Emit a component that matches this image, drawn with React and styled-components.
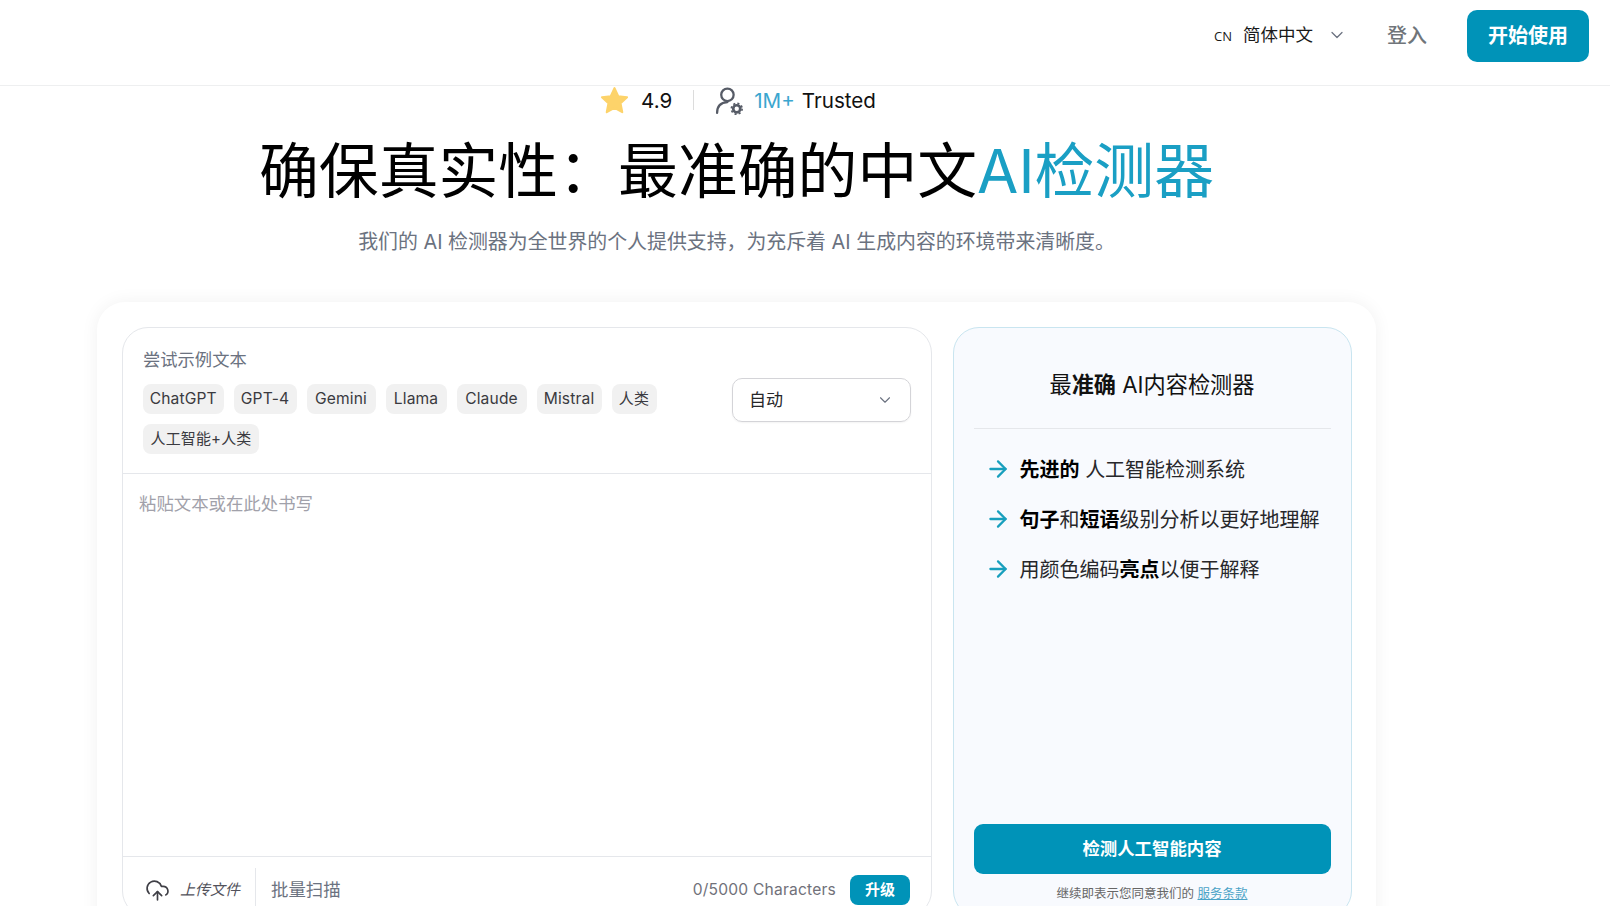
import React from "react";
import styled, { createGlobalStyle } from "styled-components";
import { ChevronDown, ArrowRight, CloudUpload } from "lucide-react";

const Global = createGlobalStyle`
  html, body { margin: 0; height: 100%; overflow: hidden; background: #fff; }
  body { font-family: Inter, "Noto Sans CJK SC", sans-serif; color: #0a0a0a; }
  * { box-sizing: border-box; }
`;
const Header = styled.header`
  height: 86px; border-bottom: 1px solid #eeeff0; display: flex; align-items: center;
  justify-content: flex-end; padding: 0 21px 11px 0;
`;
const Lang = styled.div`
  display: flex; align-items: center; font-size: 17.5px; color: #1a1a1a; margin-bottom: 7px;
`;
const LangCode = styled.span`
  font: 500 13px "Open Sans", sans-serif; margin-right: 11px; position: relative; top: 2px;
`;
const LangChevron = styled(ChevronDown)`
  margin-left: 14px; color: #6b7280; width: 20px; height: 20px; stroke-width: 1.5; position: relative; top: 1px;
`;
const SignIn = styled.span`
  margin-left: 40px; margin-right: 40px; margin-bottom: 5px; font-size: 20px; font-weight: 500; color: #70757a;
`;
const Start = styled.button`
  width: 122px; height: 52px; border: 0; border-radius: 10px; background: #0093b8; color: #fff;
  font: 700 20px Inter, "Noto Sans CJK SC", sans-serif; padding: 0 0 4px; margin-top: -2px;
`;
const Container = styled.main`
  width: 1279px; margin-left: 97px;
`;
const Stats = styled.div`
  display: flex; align-items: center; justify-content: center; height: 28px; font-size: 20.6px; padding-left: 2px;
`;
const Rating = styled.span`margin-left: 11px; color: #111;`;
const StatDivider = styled.span`
  width: 1px; height: 20px; background: #dcdcdc; margin: 0 21px;
`;
const Million = styled.span`margin-left: 10px; margin-right: 7px; color: #3ba6cf; font-weight: 400;`;
const Trusted = styled.span`color: #111;`;
const Title = styled.h1`
  margin: 11px 0 0; font-size: 59.85px; font-weight: 400; line-height: 92px; text-align: center; color: #000; white-space: nowrap;
`;
const Accent = styled.span`color: #1a9fc4;`;
const Subtitle = styled.p`
  margin: 10px 0 0; font-size: 19.9px; line-height: 30px; text-align: center; color: #6b7280;
`;
const Card = styled.section`
  margin-top: 45px; height: 660px; padding: 25px 24.5px 25px 25px; border-radius: 28px; background: #fff;
  box-shadow: 0 0 18px rgba(0,0,0,.06); display: flex; gap: 20.5px; align-items: flex-start;
`;
const LeftPanel = styled.div`
  width: 810px; height: 590px; flex: none; border: 1px solid #e5e7eb; border-radius: 26px; display: flex; flex-direction: column; overflow: hidden;
`;
const Top = styled.div`
  height: 146px; padding: 20px 20px 0 20px; display: flex; justify-content: space-between; border-bottom: 1px solid #e5e7eb;
`;
const Samples = styled.div`width: 540px;`;
const SampleLabel = styled.div`
  font-size: 17.3px; line-height: 24px; color: #6b7280; margin-bottom: 12px;
`;
const Chips = styled.div`display: flex; flex-wrap: wrap; gap: 10px;`;
const Chip = styled.span`
  height: 30px; width: ${(p) => p.$width}px; border-radius: 8px; background: #f1f1f1; color: #3a3a40;
  font-size: ${(p) => p.$cjk ? 15 : 15.6}px; line-height: 30px; letter-spacing: .15px; text-align: center; white-space: nowrap;
`;
const Select = styled.div`
  width: 179px; height: 44px; margin-top: 30px; border: 1px solid #d4d4d8; border-radius: 10px; padding: 0 16px 4px;
  display: flex; align-items: center; justify-content: space-between; font-size: 17px; color: #27272a;
  box-shadow: 0 1px 2px rgba(0,0,0,.05);
`;
const SelectChevron = styled(ChevronDown)`
  width: 18px; height: 18px; color: #6b7280; stroke-width: 1.5; margin-top: 4px;
`;
const Placeholder = styled.div`
  flex: 1; padding: 17px 16px; font-size: 17.4px; line-height: 26px; color: #a1a1aa;
`;
const Footer = styled.div`
  flex: none; height: 60px; border-top: 1px solid #e5e7eb; display: flex; align-items: flex-start; padding: 11px 21px 0 22px;
`;
const Upload = styled.div`
  display: flex; align-items: center; height: 50px; width: 111px; border-right: 1px solid #e5e7eb; align-self: flex-start;
  font-style: italic; font-size: 15px; color: #52525b;
`;
const UploadIcon = styled(CloudUpload)`
  width: 25px; height: 25px; margin-right: 10px; color: #3f3f46; stroke-width: 1.6; position: relative; top: -3px;
`;
const UploadText = styled.span`position: relative; top: -5px;`;
const Batch = styled.span`
  margin-left: 15px; margin-top: 3px; font-size: 17.4px; line-height: 38px; color: #6b7280;
`;
const Count = styled.span`
  margin-left: auto; margin-top: 3px; font-size: 15.6px; line-height: 38px; color: #71717a; letter-spacing: .2px;
`;
const Upgrade = styled.button`
  width: 60px; height: 30px; margin: 7px 0 0 14px; padding: 0 0 3px; border: 0; border-radius: 8px; background: #0093b8; color: #fff;
  font: 700 15px Inter, "Noto Sans CJK SC", sans-serif;
`;
const RightPanel = styled.aside`
  width: 399px; height: 590px; flex: none; border: 1px solid #c9e5f0; border-radius: 26px; background: #f8fafe; padding: 0 20px;
  display: flex; flex-direction: column;
`;
const RightTitle = styled.h2`
  margin: 0; height: 101px; padding-top: 41px; text-align: center; font-size: 22.2px; line-height: 32px; font-weight: 400;
  border-bottom: 1px solid #e5e7eb; color: #111;
`;
const Features = styled.ul`
  list-style: none; margin: 14px 0 0; padding: 0 0 0 11px;
`;
const Feature = styled.li`
  height: 50px; display: flex; align-items: center; font-size: 20px; color: #27272a; white-space: pre;
  b { font-weight: 700; color: #000; }
`;
const FeatureArrow = styled(ArrowRight)`
  width: 26px; height: 26px; color: #189fbd; margin: 2px 9px 0 0; stroke-width: 2.1; flex: none;
`;
const Detect = styled.button`
  margin-top: auto; height: 50px; border: 0; padding: 0 0 4px; border-radius: 9px; background: #0093b8; color: #fff;
  font: 700 17.4px Inter, "Noto Sans CJK SC", sans-serif; flex: none;
`;
const Terms = styled.p`
  margin: 10px 0 12px; text-align: center; font-size: 12.5px; line-height: 20px; color: #666;
  a { color: #4ba3c7; text-decoration: underline; }
`;

const Star = () => (
  <svg width="31" height="31" viewBox="0 0 24 24" aria-hidden="true">
    <path fill="#fdd36a" stroke="#fdd36a" strokeWidth="1.6" strokeLinejoin="round" d="M12 2.4l2.9 6.3 6.8.8-5 4.7 1.3 6.8-6-3.4-6 3.4 1.3-6.8-5-4.7 6.8-.8z" />
  </svg>
);
const GearIcon = styled.svg`margin-top: 1px;`;
const UserGear = () => (
  <GearIcon width="29" height="29" viewBox="0 0 28 28" fill="none" aria-hidden="true">
    <circle cx="12" cy="8.5" r="6" stroke="#565b66" strokeWidth="2.2" />
    <path d="M2 26c0-6 3.5-10 10-10.4" stroke="#565b66" strokeWidth="2.2" strokeLinecap="round" />
    <circle cx="21" cy="22" r="3.4" stroke="#565b66" strokeWidth="2.6" />
    <circle cx="21" cy="22" r="5.2" stroke="#565b66" strokeWidth="1.6" strokeDasharray="2 2.08" />
  </GearIcon>
);

const chips = [
  { label: "ChatGPT", width: 80.5 },
  { label: "GPT-4", width: 63 },
  { label: "Gemini", width: 69 },
  { label: "Llama", width: 61 },
  { label: "Claude", width: 70 },
  { label: "Mistral", width: 65 },
  { label: "人类", width: 45, cjk: true },
  { label: "人工智能+人类", width: 116, cjk: true },
];

export default function App() {
  return (
    <>
      <Global />
      <Header>
        <Lang><LangCode>CN</LangCode>简体中文<LangChevron /></Lang>
        <SignIn>登入</SignIn>
        <Start>开始使用</Start>
      </Header>
      <Container>
        <Stats>
          <Star />
          <Rating>4.9</Rating>
          <StatDivider />
          <UserGear />
          <Million>1M+</Million>
          <Trusted>Trusted</Trusted>
        </Stats>
        <Title>确保真实性：最准确的中文<Accent>AI检测器</Accent></Title>
        <Subtitle>我们的 AI 检测器为全世界的个人提供支持，为充斥着 AI 生成内容的环境带来清晰度。</Subtitle>
        <Card>
          <LeftPanel>
            <Top>
              <Samples>
                <SampleLabel>尝试示例文本</SampleLabel>
                <Chips>{chips.map((c) => <Chip key={c.label} $width={c.width} $cjk={c.cjk}>{c.label}</Chip>)}</Chips>
              </Samples>
              <Select>自动<SelectChevron /></Select>
            </Top>
            <Placeholder>粘贴文本或在此处书写</Placeholder>
            <Footer>
              <Upload><UploadIcon /><UploadText>上传文件</UploadText></Upload>
              <Batch>批量扫描</Batch>
              <Count>0/5000 Characters</Count>
              <Upgrade>升级</Upgrade>
            </Footer>
          </LeftPanel>
          <RightPanel>
            <RightTitle>最<b>准确</b> AI内容检测器</RightTitle>
            <Features>
              <Feature><FeatureArrow /><span><b>先进的</b> 人工智能检测系统</span></Feature>
              <Feature><FeatureArrow /><span><b>句子</b>和<b>短语</b>级别分析以更好地理解</span></Feature>
              <Feature><FeatureArrow /><span>用颜色编码<b>亮点</b>以便于解释</span></Feature>
            </Features>
            <Detect>检测人工智能内容</Detect>
            <Terms>继续即表示您同意我们的 <a href="#terms">服务条款</a></Terms>
          </RightPanel>
        </Card>
      </Container>
    </>
  );
}
